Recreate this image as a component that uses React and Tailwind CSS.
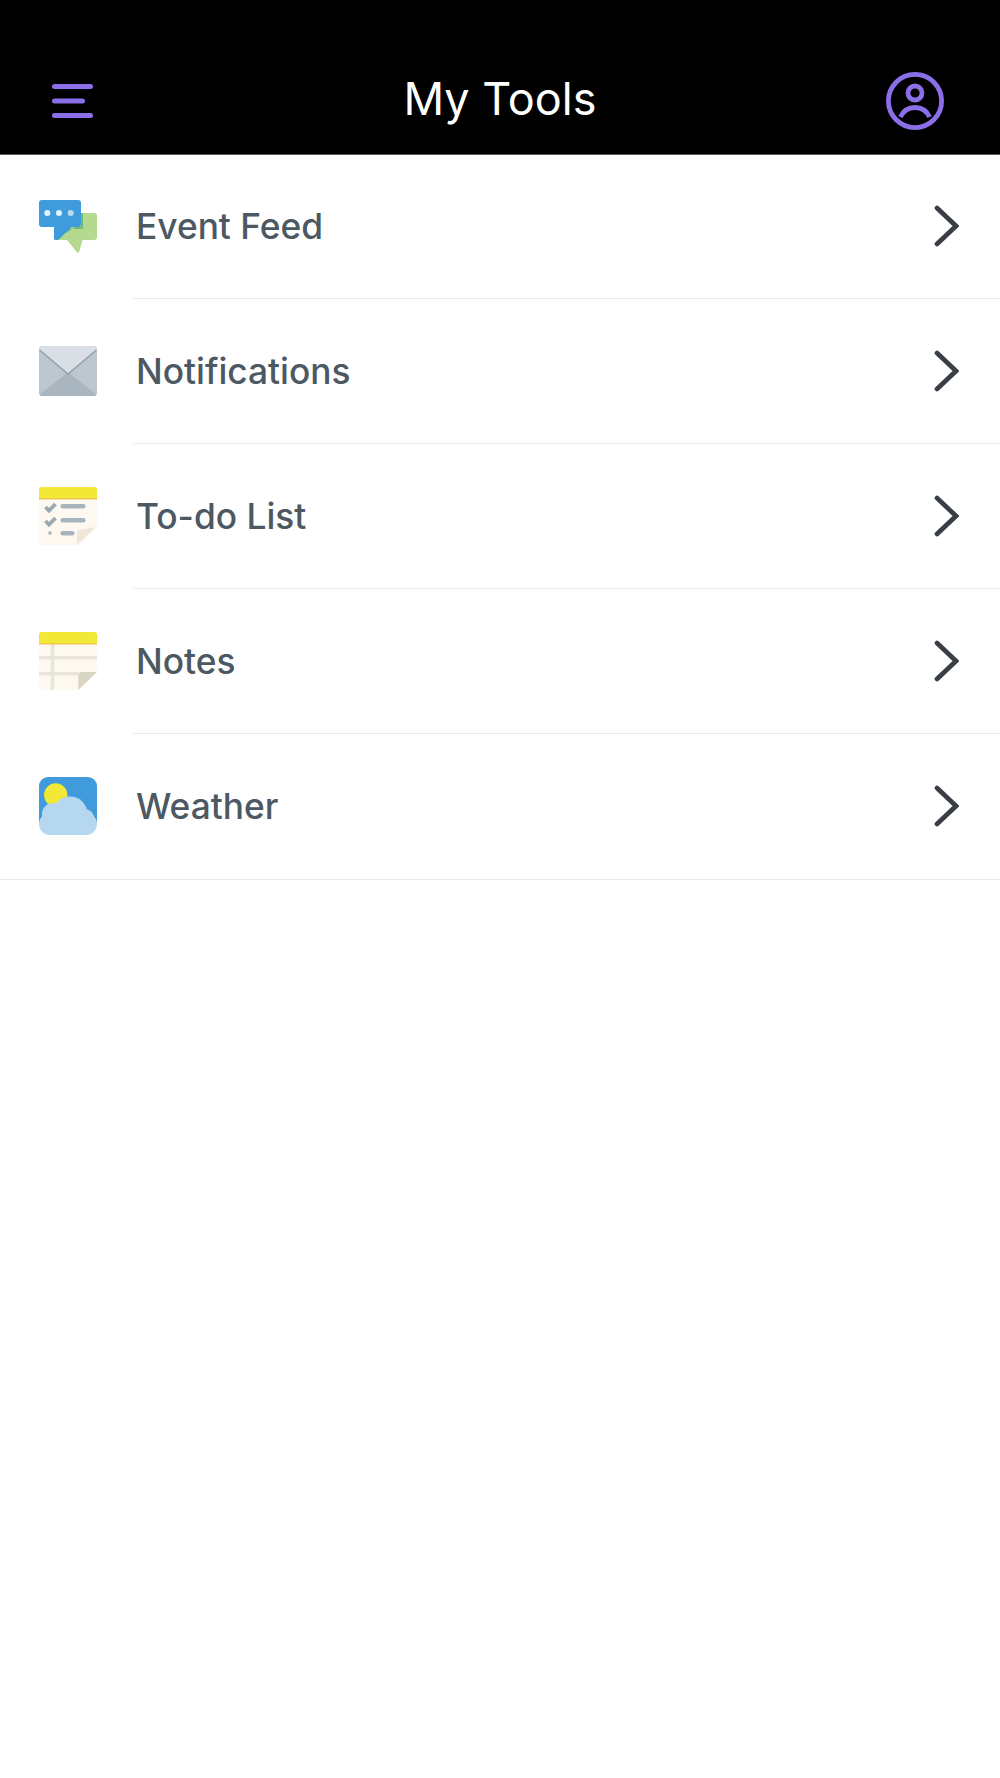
function FeedIcon() {
  return (
    <svg width="58" height="58" viewBox="0 -1 58 58">
      <path d="M24 15h31a3 3 0 0 1 3 3v21a3 3 0 0 1-3 3H43.500l-3.200 11.500a1.500 1.500 0 0 1-2.600.6L28 42h-7z" fill="#b5d98f" />
      <path d="M36 29h6v-14h2v16H30L20 42h-3z" fill="#6dbb78" />
      <path d="M3 2h36a3 3 0 0 1 3 3v21a3 3 0 0 1-3 3h-6L18.500 42h-2a1.500 1.500 0 0 1-1.500-1.500V29H3a3 3 0 0 1-3-3V5a3 3 0 0 1 3-3z" fill="#3f9bdb" />
      <circle cx="8.300" cy="15" r="3" fill="#e3f1fb" />
      <circle cx="20" cy="15" r="3" fill="#e3f1fb" />
      <circle cx="31.700" cy="15" r="3" fill="#b9dcf3" />
    </svg>
  );
}

function MailIcon() {
  return (
    <svg width="58" height="58" viewBox="0 0 58 58">
      <rect x="0" y="4" width="58" height="50" rx="3.500" fill="#bcc7d0" />
      <path d="M3 54h52a3 3 0 0 0 2.500-1.500L29 30 .5 52.500A3 3 0 0 0 3 54z" fill="#a9b6c0" />
      <path d="M3.500 4h51A3.500 3.500 0 0 1 58 7.500L29 32 0 7.500A3.500 3.500 0 0 1 3.500 4z" fill="#d9dfe5" />
      <path d="M.5 8 L29 32 L57.500 8" fill="none" stroke="#93a1ad" strokeWidth="1.6" />
    </svg>
  );
}

function TodoIcon() {
  return (
    <svg width="58" height="58" viewBox="0 0 58 58">
      <path d="M0 12h58v28L40 58H3a3 3 0 0 1-3-3z" fill="#fdf9f1" />
      <path d="M3 0h52a3 3 0 0 1 3 3v9H0V3a3 3 0 0 1 3-3z" fill="#f1e935" />
      <rect x="0" y="11" width="58" height="1.500" fill="#f3c64a" />
      <path d="M6.500 20l3.500 3.500 6.500-6.500M6.500 34l3.500 3.500 6.500-6.500" fill="none" stroke="#9aa8b3" strokeWidth="3.800" />
      <rect x="21.500" y="17" width="25" height="4.500" rx="2.200" fill="#a7b3bd" />
      <rect x="21.500" y="31" width="25" height="4.500" rx="2.200" fill="#a7b3bd" />
      <rect x="21.500" y="44" width="14" height="4.500" rx="2.200" fill="#a7b3bd" />
      <circle cx="11" cy="46" r="1.800" fill="#a7b3bd" />
      <path d="M38 58V46a3 3 0 0 1 3-3l15.500-3z" fill="#eee7d8" />
    </svg>
  );
}

function NotesIcon() {
  return (
    <svg width="58" height="58" viewBox="0 0 58 58">
      <path d="M0 11h58v29L40 58H3a3 3 0 0 1-3-3z" fill="#fdf9f1" />
      <rect x="11.700" y="11" width="3.500" height="47" fill="#e9e5da" />
      <rect x="0" y="24" width="58" height="3.500" fill="#e9e5da" />
      <rect x="0" y="40" width="40" height="3.500" fill="#e9e5da" />
      <path d="M3 0h52a3 3 0 0 1 3 3v9H0V3a3 3 0 0 1 3-3z" fill="#f1e935" />
      <rect x="0" y="11" width="58" height="1.500" fill="#f3c64a" />
      <path d="M39.300 58V44a4 4 0 0 1 4-4H58z" fill="#d8d5c3" />
    </svg>
  );
}

function WeatherIcon() {
  return (
    <svg width="58" height="58" viewBox="0 0 58 58">
      <path d="M9 0h40a9 9 0 0 1 9 9v37H0V9a9 9 0 0 1 9-9z" fill="#3f9bdb" />
      <circle cx="16.700" cy="18" r="11.700" fill="#f1e935" />
      <rect x="0" y="36" width="58" height="22" rx="11" fill="#b5d8f0" />
      <circle cx="31" cy="37" r="17.500" fill="#b5d8f0" />
      <circle cx="14" cy="37" r="11" fill="#b5d8f0" />
      <circle cx="46" cy="41" r="9" fill="#b5d8f0" />
    </svg>
  );
}

const tools = [
  { name: 'Event Feed', icon: FeedIcon },
  { name: 'Notifications', icon: MailIcon },
  { name: 'To-do List', icon: TodoIcon },
  { name: 'Notes', icon: NotesIcon },
  { name: 'Weather', icon: WeatherIcon },
];

export default function App() {
  return (
    <div className="min-h-[1778px] bg-white font-['Inter',sans-serif]">
      {/* Header */}
      <header className="grid h-[155px] grid-cols-3 items-center border-b border-[#5a5a5a] bg-black pt-[48px] pr-[56px] pl-[52px]">
        <svg width="41" height="34" viewBox="0 0 41 34" className="justify-self-start" fill="none" stroke="#8b6fe8" strokeWidth="5" strokeLinecap="round">
          <path d="M2.500 2.500h36M2.500 17h28M2.500 31.500h36" />
        </svg>
        <h1 className="mb-[5px] ml-[4px] justify-self-center text-[45px] leading-none font-normal whitespace-nowrap text-white">My Tools</h1>
        <svg width="58" height="58" viewBox="0 0 58 58" className="justify-self-end" fill="none" stroke="#8b6fe8" strokeWidth="4.800">
          <circle cx="29" cy="29" r="26.600" />
          <circle cx="29" cy="21" r="7" />
          <path d="M14.500 45c3-6.500 8.500-9.500 14.500-9.500s11.500 3 14.500 9.500" />
        </svg>
      </header>

      {/* Tool list */}
      <main className="border-b border-[#e8eaec]">
        {tools.map((tool, i) => {
          const Icon = tool.icon;
          return (
            <div key={tool.name} className="flex items-stretch pl-[39px]">
              <div className="-mt-[2px] flex shrink-0 items-center">
                <Icon />
              </div>
              <div className={`ml-[36px] flex flex-1 items-center justify-between pr-[41px] pl-[3px] ${i === 0 ? 'h-[144px]' : 'h-[145px]'} ${i < tools.length - 1 ? 'border-b border-[#e8eaec]' : ''}`}>
                <span className="pt-[2px] text-[35.300px] font-medium text-[#4c5862]">{tool.name}</span>
                <svg width="25" height="42" viewBox="0 0 25 42" className="mb-[1px]" fill="none" stroke="#3a3f45" strokeWidth="4.700" strokeLinecap="round" strokeLinejoin="miter">
                  <path d="M3 3l19 18L3 39" />
                </svg>
              </div>
            </div>
          );
        })}
      </main>
    </div>
  );
}
